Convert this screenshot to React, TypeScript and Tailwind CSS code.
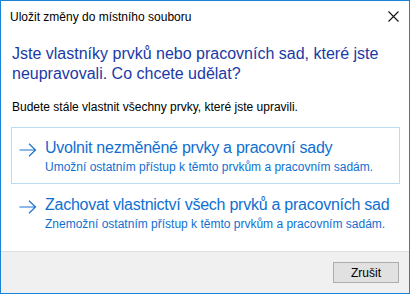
import React from "react";

const font = { fontFamily: '"Liberation Sans", Arial, sans-serif' };

function Arrow() {
  return (
    <svg width="18" height="14" viewBox="0 0 18 14" className="shrink-0">
      <path d="M0.5 7 H16.5 M10 0.8 L16.5 7 L10 13.2" fill="none" stroke="#1c73cf" strokeWidth="1.2" />
    </svg>
  );
}

function CommandLink({ title, note, active }: { title: string; note: string; active?: boolean }) {
  return (
    <div
      className={
        "ml-[10px] mr-[9px] h-[57px] border flex pl-[7px] pt-[14px] " +
        (active ? "border-[#b9dcf5]" : "border-transparent")
      }
    >
      <div className="w-[18px] h-[14px] mt-[1px] mr-[8px]">
        <Arrow />
      </div>
      <div className="flex flex-col -mt-[4px]">
        <span className="text-[16px] leading-[20px] tracking-[-0.25px] text-[#0f6fd1] whitespace-nowrap">{title}</span>
        <span className="text-[12px] leading-[16px] mt-[1px] text-[#0f6fd1] whitespace-nowrap">{note}</span>
      </div>
    </div>
  );
}

export default function App() {
  return (
    <div className="w-[410px] h-[294px] bg-white border border-[#1883d7] flex flex-col overflow-hidden" style={font}>
      {/* title bar */}
      <div className="h-[30px] flex items-start justify-between pt-[8px] pl-[9px] pr-[10px]">
        <span className="text-[12px] leading-[16px] text-black">Uložit změny do místního souboru</span>
        <svg width="11" height="11" viewBox="0 0 11 11" className="mt-[2px]">
          <path d="M0.5 0.5 L10.5 10.5 M10.5 0.5 L0.5 10.5" stroke="#111" strokeWidth="1.1" />
        </svg>
      </div>

      {/* content */}
      <div className="flex-1 flex flex-col">
        <p className="mt-[13px] ml-[11px] mr-[20px] text-[16px] leading-[20px] text-[#1a3aa6]">
          Jste vlastníky prvků nebo pracovních sad, které jste neupravovali. Co chcete udělat?
        </p>
        <p className="mt-[15px] ml-[11px] text-[12px] leading-[16px] text-black">
          Budete stále vlastnit všechny prvky, které jste upravili.
        </p>
        <div className="mt-[12px] flex flex-col">
          <CommandLink
            active
            title="Uvolnit nezměněné prvky a pracovní sady"
            note="Umožní ostatním přístup k těmto prvkům a pracovním sadám."
          />
          <CommandLink
            title="Zachovat vlastnictví všech prvků a pracovních sad"
            note="Znemožní ostatním přístup k těmto prvkům a pracovním sadám."
          />
        </div>
      </div>

      {/* footer */}
      <div className="h-[42px] shrink-0 bg-[#f0f0f0] border-t border-[#dfdfdf] flex justify-end items-start pt-[10px] pr-[10px]">
        <button className="w-[66px] h-[21px] bg-[#e1e1e1] border border-[#adadad] text-[12px] leading-[16px] text-black">
          Zrušit
        </button>
      </div>
    </div>
  );
}
